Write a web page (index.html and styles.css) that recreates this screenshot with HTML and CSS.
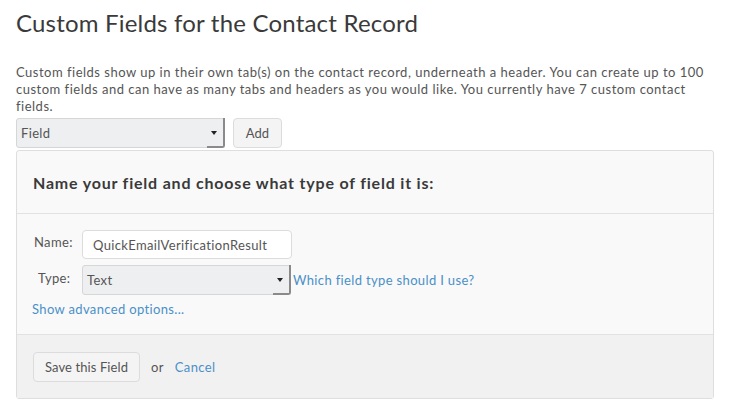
FILE: index.html
```html
<!DOCTYPE html>
<html>
<head>
<meta charset="utf-8">
<link rel="stylesheet" href="styles.css">
</head>
<body>
<div class="page">
  <h1 class="title">Custom Fields for the Contact Record</h1>
  <p class="intro">Custom fields show up in their own tab(s) on the contact record, underneath a header. You can create up to 100 custom fields and can have as many tabs and headers as you would like. You currently have 7 custom contact fields.</p>
  <div class="addrow">
    <div class="select select-wide"><span class="select-text">Field</span><span class="select-arrow"></span></div>
    <div class="btn btn-add">Add</div>
  </div>
  <div class="panel">
    <div class="panel-head">Name your field and choose what type of field it is:</div>
    <div class="panel-body">
      <div class="row">
        <span class="label label-name">Name:</span>
        <div class="input">QuickEmailVerificationResult</div>
      </div>
      <div class="row row-type">
        <span class="label label-type">Type:</span>
        <div class="select select-type"><span class="select-text">Text</span><span class="select-arrow"></span></div>
        <a class="link">Which field type should I use?</a>
      </div>
      <a class="link adv">Show advanced options...</a>
    </div>
    <div class="panel-foot">
      <div class="btn btn-save">Save this Field</div>
      <span class="or">or</span>
      <a class="link">Cancel</a>
    </div>
  </div>
</div>
</body>
</html>
```
FILE: styles.css
```css
html, body { margin: 0; padding: 0; background: #fff; }
body { font-family: Lato, "Liberation Sans", sans-serif; color: #555; letter-spacing: 0.35px; }
.page { padding: 0 16px; width: 698px; }
.title { margin: 0; padding-top: 9px; font-size: 24px; font-weight: 400; color: #3a3a3a; line-height: 28px; letter-spacing: 0.2px; }
.intro { margin: 27px 0 0; font-size: 13px; line-height: 17px; color: #555; letter-spacing: 0.5px; }
.addrow { display: flex; gap: 8px; margin-top: 3px; }
.select { position: relative; box-sizing: border-box; height: 30px; background: #eeeff1; border: 1px solid #d6d6d6; border-radius: 3px; display: flex; align-items: center; font-size: 13px; color: #555; }
.select-wide { width: 209px; }
.select-type { width: 209px; }
.select-text { padding-left: 4px; flex: 1; }
.select-arrow { align-self: stretch; width: 16px; border-right: 2px solid #8a8a8a; border-bottom: 2px solid #8a8a8a; border-bottom-right-radius: 3px; margin: -1px -1px -1px 0; position: relative; }
.select-arrow::after { content: ""; position: absolute; left: 4px; top: 13px; border-left: 3px solid transparent; border-right: 3px solid transparent; border-top: 4px solid #222; }
.btn { box-sizing: border-box; height: 30px; border: 1px solid #dcdcdc; border-radius: 4px; background: #f4f4f4; display: flex; align-items: center; justify-content: center; font-size: 13px; color: #555; letter-spacing: 0.1px; }
.btn-add { width: 49px; }
.panel { margin-top: 2px; border: 1px solid #dedede; border-radius: 3px; background: #f9f9f9; }
.panel-head { height: 62px; display: flex; align-items: center; padding-left: 16px; font-size: 16px; font-weight: 700; color: #3a3a3a; border-bottom: 1px solid #e2e2e2; letter-spacing: 0.8px; }
.panel-body { padding: 16px 16px 17px 16px; border-bottom: 1px solid #e2e2e2; }
.row { display: flex; align-items: center; }
.row-type { margin-top: 6px; }
.label { font-size: 13px; color: #555; }
.label-name { width: 48px; padding-left: 1px; margin-top: -5px; }
.label-type { width: 44px; padding-left: 5px; margin-top: -4px; }
.input { box-sizing: border-box; width: 210px; height: 29px; background: #fff; border: 1px solid #dcdcdc; border-radius: 4px; display: flex; align-items: center; padding-left: 10px; font-size: 13px; color: #555; }
.link { color: #4a90c8; font-size: 13px; text-decoration: none; }
.row-type .link { margin-left: 2px; }
.adv { display: block; margin-top: 6px; margin-left: -1px; }
.panel-foot { background: #f2f1f2; height: 63px; display: flex; align-items: center; padding-left: 16px; }
.btn-save { width: 107px; height: 30px; }
.or { margin-left: 11px; font-size: 13px; color: #555; }
.panel-foot .link { margin-left: 11px; }
```
